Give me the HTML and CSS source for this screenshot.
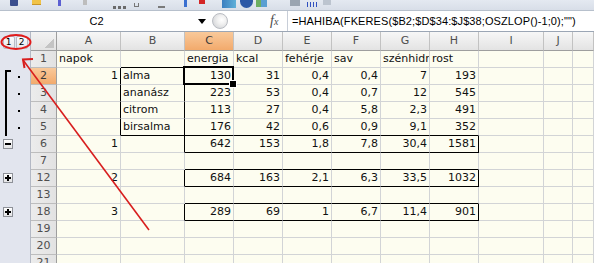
FILE: index.html
```html
<!DOCTYPE html>
<html lang="hu">
<head>
<meta charset="utf-8">
<title>Excel</title>
<link rel="stylesheet" href="styles.css">
</head>
<body>
<div class="app">
  <div class="toolbar">
    <span class="ic i1"></span><span class="ic i2"></span><span class="ic i3"></span><span class="ic i4"></span>
    <span class="ic i5"></span><span class="ic i6"></span><span class="ic i7"></span><span class="ic i8"></span>
    <span class="ic i9"></span><span class="ic i10"></span><span class="ic i11"></span><span class="ic i12"></span>
    <span class="ic i13"></span><span class="ic i14"></span><span class="ic i15"></span>
  </div>
  <div class="fbar">
    <div class="namebox">C2</div>
    <div class="drop"><svg width="8" height="5" viewBox="0 0 8 5"><path d="M0 0H8L4 5Z" fill="#000"/></svg></div>
    <div class="grip"></div>
    <div class="fx"><span class="f">f</span><span class="x">x</span></div>
    <div class="fsep"></div>
    <div class="formula">=HAHIBA(FKERES($B2;$D$34:$J$38;OSZLOP()-1;0);"")</div>
  </div>
  <div class="sheet">
    <div class="row hdr">
      <div class="ol olh"><span class="lv">1</span><span class="lv">2</span></div>
      <div class="corner"><span class="tri"></span></div>
      <div class="ch">A</div><div class="ch">B</div><div class="ch sel">C</div><div class="ch">D</div><div class="ch">E</div><div class="ch">F</div><div class="ch">G</div><div class="ch">H</div><div class="ch">I</div><div class="ch">J</div><div class="ch"></div>
    </div>
    <div class="row">
      <div class="ol"></div><div class="rh">1</div>
      <div class="c">napok</div><div class="c bb"></div><div class="c">energia</div><div class="c">kcal</div><div class="c">fehérje</div><div class="c">sav</div><div class="c">szénhidr</div><div class="c">rost</div><div class="c"></div><div class="c"></div><div class="c"></div>
    </div>
    <div class="row">
      <div class="ol"><span class="vl top"></span><span class="dot"></span></div><div class="rh sel">2</div>
      <div class="c n br">1</div><div class="c br">alma</div><div class="c n active">130</div><div class="c n">31</div><div class="c n">0,4</div><div class="c n">0,4</div><div class="c n">7</div><div class="c n">193</div><div class="c"></div><div class="c"></div><div class="c"></div>
    </div>
    <div class="row">
      <div class="ol"><span class="vl"></span><span class="dot"></span></div><div class="rh">3</div>
      <div class="c br"></div><div class="c br">ananász</div><div class="c n">223</div><div class="c n">53</div><div class="c n">0,4</div><div class="c n">0,7</div><div class="c n">12</div><div class="c n">545</div><div class="c"></div><div class="c"></div><div class="c"></div>
    </div>
    <div class="row">
      <div class="ol"><span class="vl"></span><span class="dot"></span></div><div class="rh">4</div>
      <div class="c br"></div><div class="c br">citrom</div><div class="c n">113</div><div class="c n">27</div><div class="c n">0,4</div><div class="c n">5,8</div><div class="c n">2,3</div><div class="c n">491</div><div class="c"></div><div class="c"></div><div class="c"></div>
    </div>
    <div class="row">
      <div class="ol"><span class="vl"></span><span class="dot"></span></div><div class="rh">5</div>
      <div class="c br"></div><div class="c br bb">birsalma</div><div class="c n bb">176</div><div class="c n bb">42</div><div class="c n bb">0,6</div><div class="c n bb">0,9</div><div class="c n bb">9,1</div><div class="c n bb">352</div><div class="c"></div><div class="c"></div><div class="c"></div>
    </div>
    <div class="row">
      <div class="ol"><span class="obtn minus"></span></div><div class="rh">6</div>
      <div class="c n">1</div><div class="c br"></div><div class="c n bb">642</div><div class="c n bb">153</div><div class="c n bb">1,8</div><div class="c n bb">7,8</div><div class="c n bb">30,4</div><div class="c n bb br">1581</div><div class="c"></div><div class="c"></div><div class="c"></div>
    </div>
    <div class="row">
      <div class="ol"></div><div class="rh">7</div>
      <div class="c"></div><div class="c"></div><div class="c bb"></div><div class="c bb"></div><div class="c bb"></div><div class="c bb"></div><div class="c bb"></div><div class="c bb"></div><div class="c"></div><div class="c"></div><div class="c"></div>
    </div>
    <div class="row">
      <div class="ol"><span class="obtn plus"></span></div><div class="rh">12</div>
      <div class="c n">2</div><div class="c br"></div><div class="c n bb">684</div><div class="c n bb">163</div><div class="c n bb">2,1</div><div class="c n bb">6,3</div><div class="c n bb">33,5</div><div class="c n bb br">1032</div><div class="c"></div><div class="c"></div><div class="c"></div>
    </div>
    <div class="row">
      <div class="ol"></div><div class="rh">13</div>
      <div class="c"></div><div class="c"></div><div class="c bb"></div><div class="c bb"></div><div class="c bb"></div><div class="c bb"></div><div class="c bb"></div><div class="c bb"></div><div class="c"></div><div class="c"></div><div class="c"></div>
    </div>
    <div class="row">
      <div class="ol"><span class="obtn plus"></span></div><div class="rh">18</div>
      <div class="c n">3</div><div class="c br"></div><div class="c n bb">289</div><div class="c n bb">69</div><div class="c n bb">1</div><div class="c n bb">6,7</div><div class="c n bb">11,4</div><div class="c n bb br">901</div><div class="c"></div><div class="c"></div><div class="c"></div>
    </div>
    <div class="row">
      <div class="ol"></div><div class="rh">19</div>
      <div class="c"></div><div class="c"></div><div class="c"></div><div class="c"></div><div class="c"></div><div class="c"></div><div class="c"></div><div class="c"></div><div class="c"></div><div class="c"></div><div class="c"></div>
    </div>
    <div class="row">
      <div class="ol"></div><div class="rh">20</div>
      <div class="c"></div><div class="c"></div><div class="c"></div><div class="c"></div><div class="c"></div><div class="c"></div><div class="c"></div><div class="c"></div><div class="c"></div><div class="c"></div><div class="c"></div>
    </div>
    <div class="row">
      <div class="ol"></div><div class="rh">21</div>
      <div class="c"></div><div class="c"></div><div class="c"></div><div class="c"></div><div class="c"></div><div class="c"></div><div class="c"></div><div class="c"></div><div class="c"></div><div class="c"></div><div class="c"></div>
    </div>
  </div>
  <svg class="annot" width="594" height="263" viewBox="0 0 594 263">
    <ellipse cx="16" cy="42" rx="14.5" ry="7" fill="none" stroke="#e11b1b" stroke-width="2"/>
    <line x1="149" y1="230" x2="23" y2="60" stroke="#d81e1e" stroke-width="1.6"/>
    <polyline points="33,59 23,59.5 24.5,68" fill="none" stroke="#d81e1e" stroke-width="2"/>
  </svg>
</div>
</body>
</html>
```

FILE: styles.css
```css
* { box-sizing: border-box; }
html, body { margin: 0; padding: 0; }
body {
  width: 594px;
  height: 263px;
  overflow: hidden;
  background: #fdfdf0;
  font-family: "DejaVu Sans", Verdana, sans-serif;
  font-size: 11px;
  color: #111;
}
.app { position: relative; width: 594px; height: 263px; overflow: hidden; }

/* toolbar remnant */
.toolbar {
  height: 10px;
  display: flex;
  align-items: flex-start;
  background: linear-gradient(#e4e9f1, #d8dee8);
}
.ic { display: block; flex: none; }
.i1 { margin-left: 10px; width: 8px; height: 6px; background: #3a4e8e; border-radius: 0 0 1px 1px; }
.i2 { margin-left: 14px; width: 9px; height: 5px; background: #f1c347; border-bottom: 1px solid #c8962a; }
.i3 { margin-left: 17px; width: 3px; height: 6px; background: #5c60d2; }
.i4 { margin-left: 22px; width: 4px; height: 5px; background: #bdbdbd; }
.i5 { margin-left: 26px; margin-top: 6px; width: 15px; height: 3px; background: repeating-linear-gradient(90deg, #6a6a6a 0 3px, transparent 3px 5px); }
.i6 { margin-left: 6px; margin-top: 3px; width: 5px; height: 4px; border: 1px solid #777; border-top: none; }
.i7 { margin-left: 19px; margin-top: 6px; width: 7px; height: 2px; background: #7a7a7a; }
.i8 { margin-left: 19px; width: 3px; height: 7px; background: #3a6fd0; }
.i9 { margin-left: 12px; width: 6px; height: 4px; background: #d42626; }
.i10 { margin-left: 17px; width: 14px; height: 8px; background: linear-gradient(90deg, #3c7fc0, #5fb0d8); }
.i11 { margin-left: 4px; width: 13px; height: 8px; background: #2c58a6; border-radius: 0 0 7px 7px; }
.i12 { margin-left: 3px; width: 11px; height: 7px; background: linear-gradient(90deg, #6cae62 50%, #5a9fd2 50%); }
.i13 { margin-left: 23px; width: 10px; height: 6px; background: #9ba5b1; }
.i14 { margin-left: 7px; margin-top: 2px; width: 11px; height: 5px; background: repeating-linear-gradient(90deg, #3050c0 0 1px, transparent 1px 3px); }
.i15 { margin-left: 5px; width: 8px; height: 5px; background: #bcc4cf; }

/* formula bar */
.fbar {
  height: 22px;
  display: flex;
  align-items: center;
  background: #fff;
  border-top: 1px solid #b7c0cc;
  border-bottom: 1px solid #9ba6b5;
  font-family: "Liberation Sans", Arial, sans-serif;
  font-size: 11px;
  color: #000;
}
.namebox { width: 193px; text-align: center; flex: none; }
.drop { width: 17px; display: flex; justify-content: center; flex: none; }
.grip {
  flex: none;
  margin-left: 2px;
  width: 16px;
  height: 16px;
  border-radius: 50%;
  border: 1px solid #b9bcc2;
  background: radial-gradient(circle at 62% 42%, #ffffff 0, #f1f1f1 35%, #c9cbcf 100%);
}
.fx {
  flex: none;
  margin-left: 42px;
  width: 12px;
  color: #4a4a4a;
  font-family: "Liberation Serif", "Times New Roman", serif;
  font-style: italic;
  display: flex;
  align-items: baseline;
}
.fx .f { font-size: 14px; }
.fx .x { font-size: 10px; margin-left: 0; }
.fsep { flex: none; margin-left: 5px; width: 1px; height: 20px; background: #c8ced8; }
.formula { padding-left: 4px; white-space: nowrap; letter-spacing: 0.1px; }

/* sheet grid */
.row {
  display: grid;
  grid-template-columns: 31px 26px 64px 64px repeat(6, 49px) 65px 29px 1fr;
  height: 17px;
}
.row.hdr { height: 19px; }

.ol {
  background: #e2e5ee;
  border-right: 1px solid #b3b8c4;
  display: flex;
  align-items: center;
}
.olh { justify-content: center; gap: 1px; padding-top: 1px; }
.lv {
  width: 12px;
  height: 13px;
  border: 1px solid #b8bcc6;
  border-radius: 2px;
  background: linear-gradient(#fbfbfd, #e6e8ee);
  font-size: 9px;
  line-height: 11px;
  text-align: center;
  color: #000;
}
.vl { align-self: stretch; width: 2px; margin-left: 5px; background: #000; }
.vl.top {
  align-self: flex-end;
  height: 15px;
  width: 6px;
  background: none;
  border-left: 2px solid #000;
  border-top: 2px solid #000;
}
.dot { width: 2px; height: 2px; background: #000; margin-left: 11px; }
.vl.top + .dot { margin-left: 7px; }
.obtn {
  position: relative;
  align-self: flex-start;
  margin-top: 3px;
  margin-left: 3px;
  width: 10px;
  height: 10px;
  border: 1px solid #8e9198;
  background: linear-gradient(#ffffff, #e4e4e6);
}
.obtn::before {
  content: "";
  position: absolute;
  left: 1px; top: 3px;
  width: 6px; height: 2px;
  background: #000;
}
.obtn.plus::after {
  content: "";
  position: absolute;
  left: 3px; top: 1px;
  width: 2px; height: 6px;
  background: #000;
}

.corner {
  background: linear-gradient(#f3f3f3, #e3e3e3);
  border-right: 1px solid #9e9e9e;
  border-bottom: 1px solid #9e9e9e;
  display: flex;
  justify-content: flex-end;
  align-items: flex-end;
  padding: 0 2px 2px 0;
}
.tri {
  width: 9px; height: 9px;
  background: linear-gradient(to bottom right, transparent 50%, #c4c4c4 50%);
}
.ch {
  background: linear-gradient(#f7f7f7, #e3e3e3);
  border-right: 1px solid #c2c2c2;
  border-bottom: 1px solid #9e9e9e;
  text-align: center;
  line-height: 18px;
  color: #4e4e4e;
}
.rh {
  background: linear-gradient(90deg, #ececec, #e2e2e2);
  border-right: 1px solid #9e9e9e;
  border-bottom: 1px solid #bdbdbd;
  text-align: center;
  line-height: 16px;
  color: #4e4e4e;
}
.ch.sel, .rh.sel {
  background: linear-gradient(#f9c99a, #f2aa6c);
  color: #3a3a3a;
}

.c {
  border-right: 1px solid #d2d4d6;
  border-bottom: 1px solid #d2d4d6;
  line-height: 16px;
  padding: 0 2px;
  white-space: nowrap;
  overflow: hidden;
}
.c.n { text-align: right; }
.c.bb { border-bottom-color: #000; }
.c.br { border-right-color: #000; }

.c.active { position: relative; overflow: visible; }
.c.active::after {
  content: "";
  position: absolute;
  left: -2px; top: -2px; right: -1px; bottom: -1px;
  border: 2px solid #000;
}
.c.active::before {
  content: "";
  position: absolute;
  right: -4px; bottom: -4px;
  width: 6px; height: 6px;
  background: #000;
  border: 1px solid #fff;
  z-index: 1;
}

.annot { position: absolute; left: 0; top: 0; pointer-events: none; }
```
